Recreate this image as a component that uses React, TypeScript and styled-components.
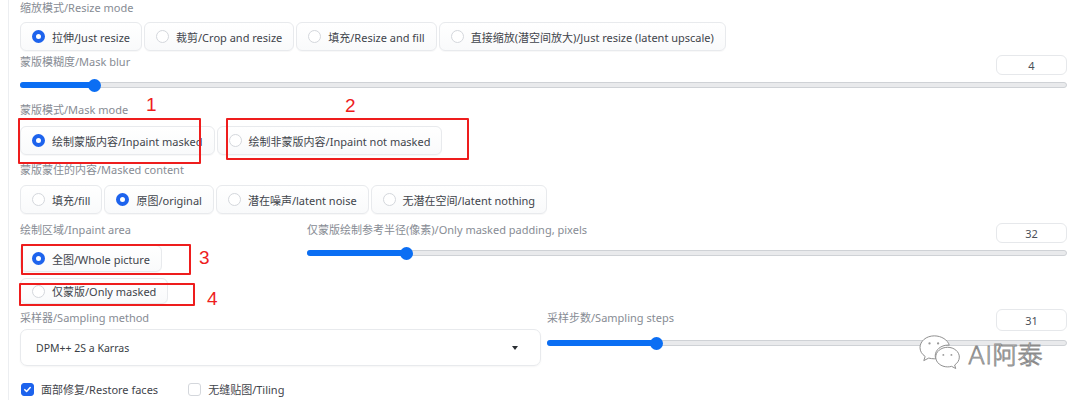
import styled, { createGlobalStyle } from 'styled-components';

const GlobalStyle = createGlobalStyle`
	html, body {
		margin: 0;
		padding: 0;
		background: #fff;
		font-family: "Noto Sans", "Noto Sans CJK SC", sans-serif;
	}
`

const Page = styled.div`
	position: relative;
	width: 1080px;
	height: 400px;
	overflow: hidden;
	background: #fff;
`

const Panel = styled.div`
	margin-left: 8px;
	border-left: 1px solid #eceef1;
	height: 100%;
	padding: 0 13px 0 11px;
	display: flex;
	flex-direction: column;
`

const Block = styled.div<{ $top?: number }>`
	margin-top: ${p => p.$top ?? 0}px;
	display: flex;
	flex-direction: column;
`

const Label = styled.div`
	font-size: 11px;
	line-height: 16px;
	color: #878c94;
	white-space: nowrap;
`

const HeadRow = styled.div`
	display: flex;
	justify-content: space-between;
	align-items: flex-start;
`

const NumBox = styled.div<{ $h?: number; $top?: number }>`
	width: 71px;
	height: ${p => p.$h ?? 20}px;
	box-sizing: border-box;
	border: 1px solid #e6e8eb;
	border-radius: 6px;
	font-size: 11px;
	color: #4b5058;
	display: flex;
	align-items: center;
	justify-content: center;
	margin-top: ${p => p.$top ?? 1}px;
`

const Radios = styled.div<{ $top?: number; $col?: boolean; $gap?: number }>`
	display: flex;
	flex-direction: ${p => (p.$col ? 'column' : 'row')};
	align-items: flex-start;
	gap: ${p => p.$gap ?? 2}px;
	margin-top: ${p => p.$top ?? 0}px;
`

const Option = styled.div<{ $h?: number }>`
	height: ${p => p.$h ?? 29}px;
	box-sizing: border-box;
	padding: 0 11px 0 11px;
	display: flex;
	align-items: center;
	gap: 7px;
	border: 1px solid #e8eaed;
	border-radius: 6px;
	background: linear-gradient(#ffffff, #f9fafb);
	box-shadow: 0 1px 1px rgba(0, 0, 0, 0.03);
	font-size: 11px;
	color: #3f444b;
	white-space: nowrap;
`

const Dot = styled.span<{ $on?: boolean }>`
	width: 13px;
	height: 13px;
	border-radius: 50%;
	box-sizing: border-box;
	flex: none;
	background: #fff;
	border: ${p => (p.$on ? '4px solid #1d63ed' : '1px solid #d4d7dc')};
`

const Slider = styled.div<{ $top?: number }>`
	position: relative;
	height: 12px;
	margin-top: ${p => p.$top ?? 0}px;
	display: flex;
	align-items: center;
`

const Track = styled.div`
	flex: 1;
	height: 6px;
	box-sizing: border-box;
	border: 1px solid #cfd2d6;
	background: #e9eaec;
	border-radius: 4px;
	position: relative;
`

const Fill = styled.div`
	position: absolute;
	left: -1px;
	top: -1px;
	bottom: -1px;
	background: #0b6ef3;
	border-radius: 4px;
`

const Thumb = styled.div`
	position: absolute;
	top: 50%;
	width: 13px;
	height: 13px;
	margin: -6.5px 0 0 -6.5px;
	border-radius: 50%;
	background: #0b6ef3;
`

const Columns = styled.div<{ $top?: number; $left: number; $gap: number }>`
	display: grid;
	grid-template-columns: ${p => p.$left}px 1fr;
	column-gap: ${p => p.$gap}px;
	margin-top: ${p => p.$top ?? 0}px;
`

const Select = styled.div`
	margin-top: 3px;
	height: 37px;
	box-sizing: border-box;
	border: 1px solid #e8eaed;
	border-radius: 7px;
	box-shadow: 0 1px 2px rgba(0, 0, 0, 0.04);
	display: flex;
	align-items: center;
	justify-content: space-between;
	padding: 0 22px 0 15px;
	font-size: 10.5px;
	color: #3a3f46;
`

const Caret = styled.span`
	width: 0;
	height: 0;
	border-left: 3.5px solid transparent;
	border-right: 3.5px solid transparent;
	border-top: 4px solid #2a2e33;
`

const Checks = styled.div`
	display: flex;
	align-items: center;
	gap: 30px;
	margin-top: 15px;
	margin-left: 1px;
`

const Check = styled.label`
	display: flex;
	align-items: center;
	gap: 7px;
	font-size: 11px;
	color: #3f444b;
`

const Box = styled.span<{ $on?: boolean }>`
	width: 13px;
	height: 13px;
	box-sizing: border-box;
	border-radius: 3px;
	border: 1px solid ${p => (p.$on ? '#1d63ed' : '#d4d7dc')};
	background: ${p => (p.$on ? '#1d63ed' : '#fff')};
	display: flex;
	align-items: center;
	justify-content: center;
`

const Mark = styled.div<{ $x: number; $y: number; $w: number; $h: number }>`
	position: absolute;
	left: ${p => p.$x}px;
	top: ${p => p.$y}px;
	width: ${p => p.$w}px;
	height: ${p => p.$h}px;
	box-sizing: border-box;
	border: 2px solid #ee1d1d;
	border-radius: 1px;
`

const Num = styled.div<{ $x: number; $y: number }>`
	position: absolute;
	left: ${p => p.$x}px;
	top: ${p => p.$y}px;
	font-family: "Liberation Sans", Arial, sans-serif;
	font-size: 19px;
	line-height: 20px;
	color: #ee1d1d;
`

const Watermark = styled.div`
	position: absolute;
	left: 918px;
	top: 333px;
	display: flex;
	align-items: center;
	gap: 6px;
`

const WaterText = styled.span`
	font-family: "DejaVu Sans", "Noto Sans CJK SC", sans-serif;
	font-weight: 300;
	font-size: 25px;
	color: #fff;
	-webkit-text-stroke: 0.9px #8a8a8a;
`

const RangeRow = ({ pct, top }: { pct: number; top: number }) => (
	<Slider $top={top}>
		<Track>
			<Fill style={{ width: `${pct}%` }} />
			<Thumb style={{ left: `${pct}%` }} />
		</Track>
	</Slider>
)

const Radio = ({ on, text, h }: { on?: boolean; text: string; h?: number }) => (
	<Option $h={h}>
		<Dot $on={on} />
		{text}
	</Option>
)

const WeChat = () => (
	<svg width="44" height="40" viewBox="0 0 46 42">
		<path
			d="M17 3C8.5 3 2 8.6 2 15.3c0 3.8 2.1 7.1 5.4 9.3L6 29l5.2-2.7c1.8 0.5 3.8 0.8 5.8 0.8 0.5 0 1 0 1.5-0.1-0.3-1-0.5-2-0.5-3.1 0-6.2 6-11.2 13.5-11.2 0.4 0 0.8 0 1.2 0.1C31.2 7.4 24.7 3 17 3z"
			fill="#fff"
			stroke="#8a8a8a"
			strokeWidth="1"
		/>
		<path
			d="M31 15c-6.9 0-12.5 4.6-12.5 10.3S24.1 35.6 31 35.6c1.5 0 2.9-0.2 4.2-0.6l4.3 2.3-1.1-3.7c2.9-1.9 4.9-4.9 4.9-8.3C43.3 19.6 37.8 15 31 15z"
			fill="#fff"
			stroke="#8a8a8a"
			strokeWidth="1"
		/>
		<circle cx="12" cy="11" r="1.2" fill="#999" />
		<circle cx="21" cy="11" r="1.2" fill="#999" />
		<circle cx="26.5" cy="23" r="1" fill="#999" />
		<circle cx="35" cy="23" r="1" fill="#999" />
	</svg>
)

export default function App() {
	return (
		<Page>
			<GlobalStyle />
			<Panel>
				<Block>
					<Label>缩放模式/Resize mode</Label>
					<Radios $top={6}>
						<Radio on text="拉伸/Just resize" />
						<Radio text="裁剪/Crop and resize" />
						<Radio text="填充/Resize and fill" />
						<Radio text="直接缩放(潜空间放大)/Just resize (latent upscale)" />
					</Radios>
				</Block>

				<Block $top={3}>
					<HeadRow>
						<Label>蒙版模糊度/Mask blur</Label>
						<NumBox>4</NumBox>
					</HeadRow>
					<RangeRow pct={7} top={4} />
				</Block>

				<Block $top={11}>
					<Label>蒙版模式/Mask mode</Label>
					<Radios $top={8}>
						<Radio on text="绘制蒙版内容/Inpaint masked" />
						<Radio text="绘制非蒙版内容/Inpaint not masked" />
					</Radios>
				</Block>

				<Block $top={7}>
					<Label>蒙版蒙住的内容/Masked content</Label>
					<Radios $top={7}>
						<Radio text="填充/fill" />
						<Radio on text="原图/original" />
						<Radio text="潜在噪声/latent noise" />
						<Radio text="无潜在空间/latent nothing" />
					</Radios>
				</Block>

				<Columns $top={8} $left={275} $gap={12}>
					<Block>
						<Label>绘制区域/Inpaint area</Label>
						<Radios $top={7} $col $gap={6}>
							<Radio on text="全图/Whole picture" h={27} />
							<Radio text="仅蒙版/Only masked" h={26} />
						</Radios>
					</Block>
					<Block>
						<HeadRow>
							<Label>仅蒙版绘制参考半径(像素)/Only masked padding, pixels</Label>
							<NumBox>32</NumBox>
						</HeadRow>
						<RangeRow pct={13} top={4} />
					</Block>
				</Columns>

				<Columns $top={6} $left={521} $gap={6}>
					<Block>
						<Label>采样器/Sampling method</Label>
						<Select>
							DPM++ 2S a Karras
							<Caret />
						</Select>
					</Block>
					<Block>
						<HeadRow>
							<Label>采样步数/Sampling steps</Label>
							<NumBox $h={22} $top={-1}>31</NumBox>
						</HeadRow>
						<RangeRow pct={21} top={6} />
					</Block>
				</Columns>

				<Checks>
					<Check>
						<Box $on>
							<svg width="9" height="9" viewBox="0 0 10 10">
								<path d="M2 5.2l2 2 4-4.4" fill="none" stroke="#fff" strokeWidth="1.7" strokeLinecap="round" strokeLinejoin="round" />
							</svg>
						</Box>
						面部修复/Restore faces
					</Check>
					<Check>
						<Box />
						无缝贴图/Tiling
					</Check>
				</Checks>
			</Panel>

			<Mark $x={18} $y={118} $w={183} $h={46} />
			<Mark $x={226} $y={118} $w={243} $h={42} />
			<Mark $x={21} $y={244} $w={170} $h={31} />
			<Mark $x={19} $y={283} $w={176} $h={23} />
			<Num $x={146} $y={95}>1</Num>
			<Num $x={345} $y={96}>2</Num>
			<Num $x={199} $y={248}>3</Num>
			<Num $x={207} $y={289}>4</Num>

			<Watermark>
				<WeChat />
				<WaterText>AI阿泰</WaterText>
			</Watermark>
		</Page>
	)
}
